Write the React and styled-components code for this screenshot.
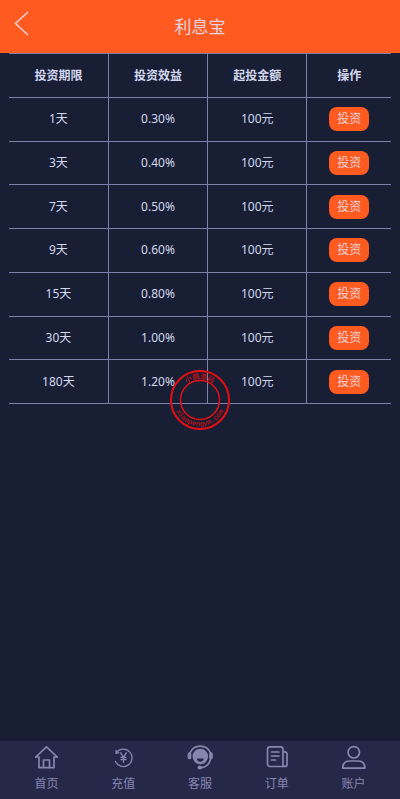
import React from 'react';
import styled, { createGlobalStyle } from 'styled-components';

const colors = {
  orange: '#ff5a1f',
  navy: '#181e33',
  bar: '#262849',
  line: '#7d80a8',
  text: '#d3d8f0',
  muted: '#8786b0',
  seal: '#e60f12',
};

const fonts = "'Noto Sans', 'Noto Sans CJK SC', sans-serif";

const GlobalStyle = createGlobalStyle`
  * {
    box-sizing: border-box;
  }
  body {
    margin: 0;
    background-color: ${colors.navy};
    color: ${colors.text};
    font-family: ${fonts};
    font-size: 12px;
  }
`;

const StyledPage = styled.div`
  display: flex;
  flex-direction: column;
  min-height: 100vh;
`;

const StyledHeader = styled.header`
  display: grid;
  grid-template-columns: 44px 1fr 44px;
  align-items: center;
  height: 53px;
  background-color: ${colors.orange};
`;

const StyledBack = styled.button`
  display: flex;
  align-self: start;
  padding: 11px 14px;
  border: 0;
  background: none;
  color: #ead0d6;
  cursor: pointer;
`;

const StyledTitle = styled.h1`
  margin: 0;
  color: #e3d3df;
  font-size: 17px;
  font-weight: 400;
  line-height: 24px;
  text-align: center;
`;

const StyledMain = styled.main`
  flex: 1;
  padding: 0 9px;
`;

const StyledTable = styled.table`
  width: 100%;
  height: 351px;
  border-collapse: collapse;
  table-layout: fixed;
  text-align: center;
  line-height: 18px;
  th,
  td {
    width: 26%;
    padding: 0;
    border: 1px solid ${colors.line};
  }
  th {
    height: 44px;
  }
  th:first-child,
  td:first-child {
    border-left: 0;
  }
  th:last-child,
  td:last-child {
    width: 22%;
    border-right: 0;
  }
`;

const StyledInvest = styled.button`
  height: 24px;
  padding: 0 8px;
  border: 0;
  border-radius: 8px;
  background-color: ${colors.orange};
  color: #ecd2d8;
  font-family: inherit;
  font-size: 12px;
  line-height: 24px;
  vertical-align: middle;
  cursor: pointer;
`;

const StyledSeal = styled.svg`
  position: fixed;
  top: 50%;
  left: 50%;
  transform: translate(-50%, -50%);
  pointer-events: none;
  text {
    fill: ${colors.seal};
    font-family: 'Liberation Mono', 'Noto Sans CJK SC', monospace;
    font-size: 7px;
    font-weight: 700;
    text-anchor: middle;
    opacity: 0.8;
  }
`;

const StyledNav = styled.nav`
  position: sticky;
  bottom: 0;
  display: flex;
  height: 58px;
  padding: 0 8px;
  background-color: ${colors.bar};
`;

const StyledNavLink = styled.a`
  display: flex;
  flex: 1;
  flex-direction: column;
  align-items: center;
  gap: 4px;
  padding-top: 4px;
  color: ${colors.muted};
  line-height: 18px;
  text-decoration: none;
`;

const StyledIcon = styled.svg`
  width: 26px;
  height: 26px;
  fill: none;
  stroke: currentColor;
  stroke-width: 1.7;
  stroke-linecap: round;
  stroke-linejoin: round;
`;

const HomeIcon = () => (
  <StyledIcon viewBox="0 0 26 26" aria-hidden="true">
    <path d="M2.8 12 13.500 1.800 24.200 12" />
    <path d="M2.800 12H6v10.700h15V12h3.200" />
    <path d="M10.500 22.500V15h6v7.500" />
  </StyledIcon>
);

const RechargeIcon = () => (
  <StyledIcon viewBox="0 0 26 26" aria-hidden="true">
    <path strokeWidth="1.300" d="M5.400 16.500a8.700 8.700 0 1 0 1.300-9.300" />
    <path strokeWidth="1.300" d="M6 5.500v2.800l2.700-.6" />
    <path strokeWidth="1.300" d="m10.700 7.800 2.800 4.500 2.800-4.500M13.500 12.300v5M11 12.300h5M11 14.500h5" />
  </StyledIcon>
);

const ServiceIcon = () => (
  <StyledIcon viewBox="0 0 26 26" aria-hidden="true">
    <path d="M3 8C5 3.500 8.800 1.200 13.300 1.200S21.500 3.500 23.500 8" />
    <path d="M23.500 14c-1 5-4.800 8.200-10 8.800" />
    <rect x="1.500" y="8" width="2" height="5.500" rx="1" fill="currentColor" />
    <rect x="23" y="8" width="2" height="5.500" rx="1" fill="currentColor" />
    <ellipse cx="12.800" cy="22.500" rx="1.500" ry="1.200" fill="currentColor" />
    <circle cx="13.300" cy="11.500" r="7.800" fill="currentColor" stroke="none" />
    <path d="M9.800 13.500h7c-.4 2.200-1.700 3.300-3.500 3.300s-3.100-1.100-3.500-3.300Z" fill={colors.bar} stroke="none" />
  </StyledIcon>
);

const OrderIcon = () => (
  <StyledIcon viewBox="0 0 26 26" aria-hidden="true">
    <path d="M19 21.500H6A2.500 2.500 0 0 1 3.500 19V4.400A2.500 2.500 0 0 1 6 1.900h10.500A2.500 2.500 0 0 1 19 4.400v14.300" />
    <path d="M19 6.900h2a2 2 0 0 1 2 2v10.600a2 2 0 0 1-4 0M19 21.500h2" />
    <path d="M7.500 7h7.500M7.500 11h7.500M7.500 15h4" />
  </StyledIcon>
);

const AccountIcon = () => (
  <StyledIcon viewBox="0 0 26 26" aria-hidden="true">
    <circle cx="12.800" cy="7.300" r="5.700" />
    <path d="M1.800 23.200c0-4.400 2.500-7.200 6.500-7.200h9c4 0 6.500 2.800 6.500 7.200Z" />
  </StyledIcon>
);

const Seal = () => (
  <StyledSeal width="62" height="62" viewBox="-31 -31 62 62" aria-hidden="true">
    <circle r="29" fill="none" stroke={colors.seal} strokeWidth="2" />
    <circle r="19.500" fill="none" stroke={colors.seal} strokeWidth="1.500" />
    <path id="seal-top" d="M-21 0A21 21 0 0 1 21 0" fill="none" />
    <path id="seal-bottom" d="M-26 0A26 26 0 0 0 26 0" fill="none" />
    <text>
      <textPath href="#seal-top" startOffset="50%">
        小鹏源码
      </textPath>
    </text>
    <text>
      <textPath href="#seal-bottom" startOffset="50%">
        xiaopengym.com
      </textPath>
    </text>
  </StyledSeal>
);

const plans = [
  { days: 1, rate: '0.30%' },
  { days: 3, rate: '0.40%' },
  { days: 7, rate: '0.50%' },
  { days: 9, rate: '0.60%' },
  { days: 15, rate: '0.80%' },
  { days: 30, rate: '1.00%' },
  { days: 180, rate: '1.20%' },
];

const links = [
  { label: '首页', Icon: HomeIcon },
  { label: '充值', Icon: RechargeIcon },
  { label: '客服', Icon: ServiceIcon },
  { label: '订单', Icon: OrderIcon },
  { label: '账户', Icon: AccountIcon },
];

const App = () => (
  <StyledPage>
    <GlobalStyle />
    <StyledHeader>
      <StyledBack type="button" aria-label="返回">
        <svg width="15" height="25" viewBox="0 0 15 25" fill="none" stroke="currentColor">
          <path strokeWidth="1.600" d="M14 1 1.500 12.500 14 24" />
        </svg>
      </StyledBack>
      <StyledTitle>利息宝</StyledTitle>
    </StyledHeader>

    <StyledMain>
      <StyledTable>
        <thead>
          <tr>
            <th scope="col">投资期限</th>
            <th scope="col">投资效益</th>
            <th scope="col">起投金额</th>
            <th scope="col">操作</th>
          </tr>
        </thead>
        <tbody>
          {plans.map(({ days, rate }) => (
            <tr key={days}>
              <td>{days}天</td>
              <td>{rate}</td>
              <td>100元</td>
              <td>
                <StyledInvest type="button">投资</StyledInvest>
              </td>
            </tr>
          ))}
        </tbody>
      </StyledTable>
    </StyledMain>

    <Seal />

    <StyledNav>
      {links.map(({ label, Icon }) => (
        <StyledNavLink href="#" key={label}>
          <Icon />
          {label}
        </StyledNavLink>
      ))}
    </StyledNav>
  </StyledPage>
);

export default App;
